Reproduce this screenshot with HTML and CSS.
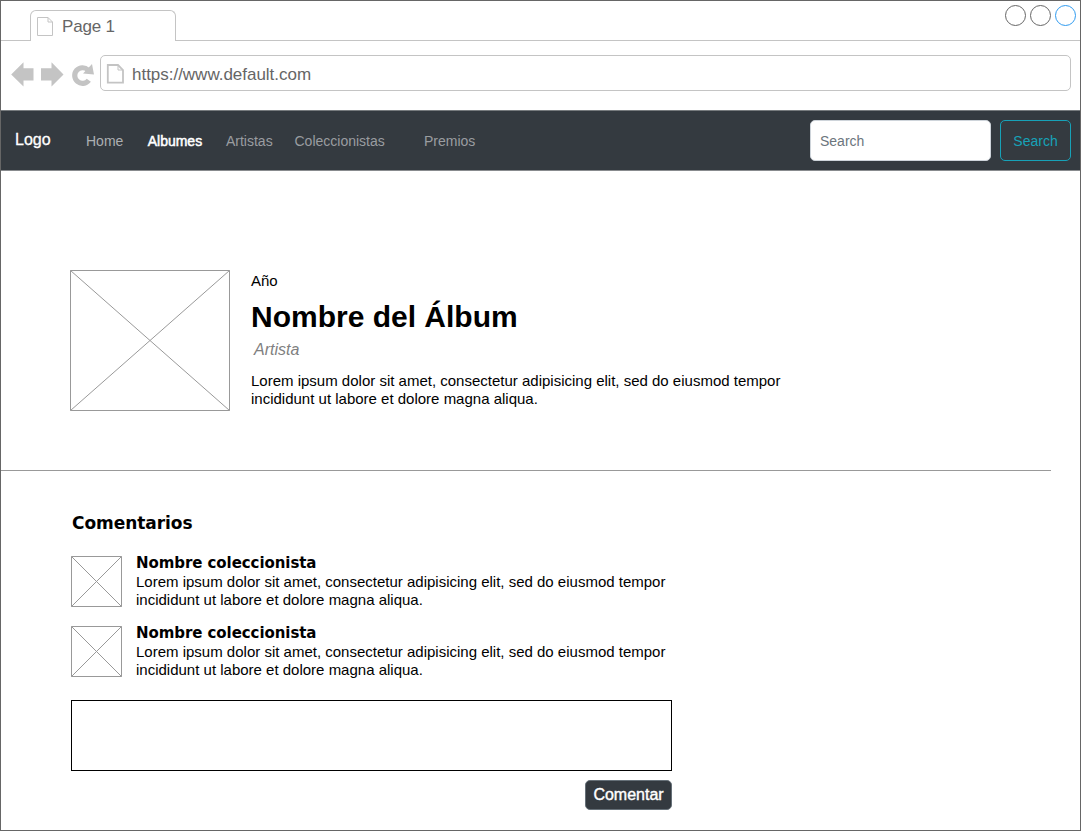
FILE: index.html
```
<!DOCTYPE html>
<html lang="es">
<head>
<meta charset="utf-8">
<title>Page 1</title>
<link rel="stylesheet" href="styles.css">
</head>
<body>
<div class="window">
  <header class="tabs">
    <div class="tab">
      <svg class="tab-icon" width="18" height="20" viewBox="0 0 18 20"><path d="M1.500 1.500H12L16.500 6V19.500H1.500ZM12 1.500V6H16.500" fill="none" stroke="#c4c4c4"/></svg>
      <span>Page 1</span>
    </div>
    <svg class="controls" width="74" height="24" viewBox="0 0 74 24" fill="none" stroke-width="1">
      <circle cx="11.500" cy="11.500" r="10" stroke="#666"/>
      <circle cx="36.500" cy="11.500" r="10" stroke="#666"/>
      <circle cx="61.500" cy="11.500" r="10" stroke="#2f9bf0"/>
    </svg>
  </header>
  <div class="toolbar">
    <svg class="nav-icons" width="86" height="28" viewBox="0 0 86 28">
      <path d="M1.200 14.500L13.500 2.300V8.300H23.500V20.500H13.500V26.500Z" fill="#c4c4c4"/>
      <path d="M53.500 14.500L41.500 2.300V8.300H31V20.500H41.500V26.500Z" fill="#c4c4c4"/>
      <path d="M78 10A7.800 7.800 0 1 0 78.800 20.200" fill="none" stroke="#c4c4c4" stroke-width="5.200"/>
      <path d="M82 4L84 14.500L73 13.500Z" fill="#c4c4c4"/>
    </svg>
    <div class="address">
      <svg width="18" height="20" viewBox="0 0 18 20"><path d="M1.800 1H12L17 6V18.700H1.800Z" fill="none" stroke="#c4c4c4" stroke-width="1.800"/><path d="M12 1V6H17" fill="none" stroke="#c4c4c4"/></svg>
      <span>https://www.default.com</span>
    </div>
  </div>
  <nav class="navbar">
    <a class="brand">Logo</a>
    <a class="link home">Home</a>
    <a class="link active">Albumes</a>
    <a class="link artists">Artistas</a>
    <a class="link collectors">Coleccionistas</a>
    <a class="link awards">Premios</a>
    <div class="search-field">Search</div>
    <div class="search-button">Search</div>
  </nav>
  <section class="album">
    <svg class="cover" width="160" height="141" viewBox="0 0 160 141" fill="none" stroke="#999"><path d="M.5 .5H159.500V140.500H.5ZL159.500 140.500M159.500 .5L.5 140.500"/></svg>
    <div class="album-info">
      <div class="year">Año</div>
      <h1>Nombre del Álbum</h1>
      <div class="artist">Artista</div>
      <p>Lorem ipsum dolor sit amet, consectetur adipisicing elit, sed do eiusmod tempor<br>incididunt ut labore et dolore magna aliqua.</p>
    </div>
  </section>
  <section class="comments">
    <h2>Comentarios</h2>
    <article class="comment">
      <svg width="51" height="51" viewBox="0 0 51 51" fill="none" stroke="#999"><path d="M.5 .5H50.500V50.500H.5ZL50.500 50.500M50.500 .5L.5 50.500"/></svg>
      <div>
        <h3>Nombre coleccionista</h3>
        <p>Lorem ipsum dolor sit amet, consectetur adipisicing elit, sed do eiusmod tempor<br>incididunt ut labore et dolore magna aliqua.</p>
      </div>
    </article>
    <article class="comment">
      <svg width="51" height="51" viewBox="0 0 51 51" fill="none" stroke="#999"><path d="M.5 .5H50.500V50.500H.5ZL50.500 50.500M50.500 .5L.5 50.500"/></svg>
      <div>
        <h3>Nombre coleccionista</h3>
        <p>Lorem ipsum dolor sit amet, consectetur adipisicing elit, sed do eiusmod tempor<br>incididunt ut labore et dolore magna aliqua.</p>
      </div>
    </article>
    <div class="comment-box"></div>
    <div class="submit">Comentar</div>
  </section>
</div>
</body>
</html>
```
FILE: styles.css
```
* { box-sizing: border-box; }
body { margin: 0; background: #fff; font-family: "Liberation Sans", Arial, sans-serif; color: #000; }
h1, h2, h3, p { margin: 0; }
svg { display: block; flex: none; }
.window { width: 1081px; height: 831px; border: 1px solid #666; overflow: hidden; }

.tabs { height: 40px; display: flex; justify-content: space-between; border-bottom: 1px solid #c4c4c4; padding-left: 29px; }
.tab { width: 146px; height: 31px; margin-top: 9px; display: flex; background: #fff; border: 1px solid #c4c4c4; border-bottom: 0; border-radius: 6px 6px 0 0; font-size: 17px; line-height: 20px; color: #666; }
.tab-icon { margin: 5px 0 0 5px; }
.tab span { margin: 6px 0 0 8px; letter-spacing: -.2px; }
.controls { margin: 3px 2px 0 0; }

.toolbar { height: 69px; display: flex; padding: 14px 9px 0 9px; }
.nav-icons { margin-top: 5px; }
.address { width: 971px; height: 36px; margin-left: 4px; display: flex; align-items: flex-start; border: 1px solid #c4c4c4; border-radius: 5px; font-size: 17px; line-height: 20px; color: #666; }
.address svg { margin: 8px 0 0 5px; }
.address span { margin: 9px 0 0 8px; letter-spacing: -.02px; }

.navbar { height: 61px; display: flex; align-items: center; background: #343a40; border-top: 1px solid #777b7e; border-bottom: 1px solid #888b8e; color: #9a9da0; font-size: 14px; padding: 0 9px 0 14px; }
.brand { width: 71px; margin-top: -2px; font-size: 16px; color: #fff; -webkit-text-stroke: .3px #fff; }
.link { padding-top: 1px; }
.home { width: 61.700px; color: #acafb2; }
.active { width: 78.300px; color: #fff; -webkit-text-stroke: .5px #fff; }
.artists { width: 68.500px; }
.collectors { width: 129.500px; }
.search-field { width: 181px; height: 41px; margin-left: auto; padding-left: 9px; border: 1px solid #ced4da; border-radius: 5px; background: #fff; color: #6c757d; line-height: 40px; }
.search-button { width: 71px; height: 41px; margin-left: 9px; border: 1px solid #17a2b8; border-radius: 5px; color: #17a2b8; text-align: center; line-height: 40px; }

.album { width: 1050px; height: 300px; display: flex; padding: 99px 0 0 69px; border-bottom: 1px solid #999; }
.album-info { margin-left: 21px; }
.year { margin-top: 2px; font-size: 15px; line-height: 18px; }
h1 { margin-top: 9px; font-size: 30px; line-height: 36px; }
.artist { margin: 5px 0 0 3px; font-size: 16px; line-height: 20px; font-style: italic; color: #808080; }
p { font-size: 15px; line-height: 18px; white-space: nowrap; }
.album p { margin-top: 12px; }

.comments { width: 671px; padding: 42px 0 0 70px; }
h2 { height: 43px; margin-left: 1px; font: bold 17px/20px "DejaVu Sans", sans-serif; letter-spacing: -.06px; }
.comment { height: 70px; display: flex; gap: 14px; }
h3 { margin-top: -3px; font: bold 15px/20px "DejaVu Sans", sans-serif; letter-spacing: -.07px; }
.comment-box { width: 601px; height: 71px; margin-top: 4px; border: 1px solid #000; }
.submit { width: 87px; height: 30px; margin: 9px 0 0 auto; background: #343a40; border: 1px solid #667078; border-radius: 5px; color: #fff; font-size: 16px; line-height: 28px; text-align: center; -webkit-text-stroke: .4px #fff; }
```
